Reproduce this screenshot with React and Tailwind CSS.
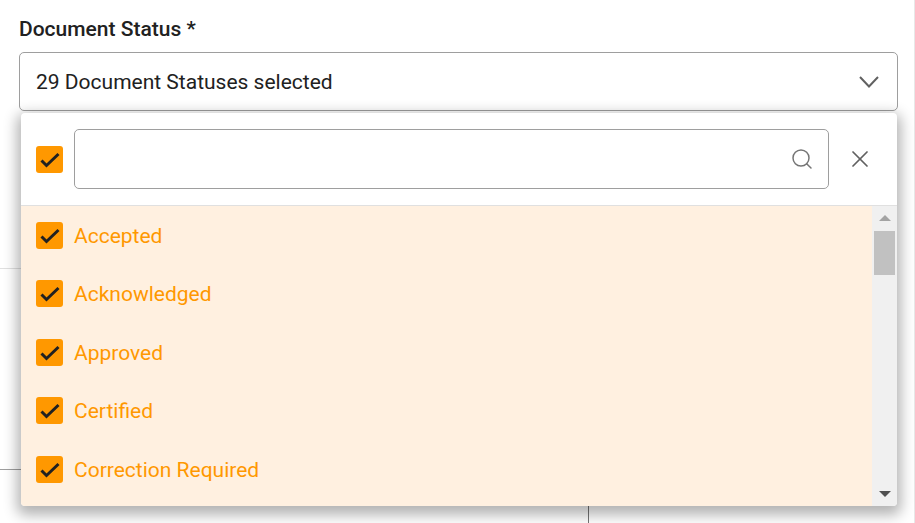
import React from 'react';
import { Search, X } from 'lucide-react';

const statuses = ['Accepted', 'Acknowledged', 'Approved', 'Certified', 'Correction Required'];

function Tick() {
    return (
        <span className="flex h-[27px] w-[27px] flex-shrink-0 items-center justify-center rounded-[3px] bg-[#ff9800]">
            <svg viewBox="0 0 27 27" className="h-[27px] w-[27px]" fill="none" stroke="#212121" strokeWidth="3">
                <path d="M5.5 14.5 L10.5 19.5 L22.5 8" />
            </svg>
        </span>
    );
}

export default function App() {
    return (
        <div className="relative h-[523px] w-[915px] overflow-hidden bg-white font-['Roboto',sans-serif]">
            {/* page behind the dropdown */}
            <div className="absolute left-0 top-[268px] h-px w-[21px] bg-[#e0e0e0]" />
            <div className="absolute left-0 top-[469px] h-px w-[21px] bg-[#9e9e9e]" />
            <div className="absolute left-[588px] top-[505px] h-[18px] w-px bg-[#757575]" />
            <div className="absolute left-[914px] top-0 h-full w-px bg-[#e8e8e8]" />

            <div className="flex flex-col pl-[19px] pr-[17px] pt-[16px]">
                <label className="text-[21px] font-medium leading-[26px] text-[#212121]">Document Status *</label>
                <div className="mt-[10px] flex h-[59px] items-center justify-between rounded-[5px] border border-[#9e9e9e] pl-[16px] pr-[18px] text-[21px] text-[#212121]">
                    <span className="pt-[2px]">29 Document Statuses selected</span>
                    <svg viewBox="0 0 20 12" className="h-[12px] w-[20px]" fill="none" stroke="#616161" strokeWidth="2">
                        <path d="M1 1 L10 10.5 L19 1" />
                    </svg>
                </div>
                <div className="absolute left-[21px] top-[113px] w-[876px] overflow-hidden rounded-[4px] bg-white shadow-[0_5px_14px_4px_rgba(0,0,0,0.3)]">
                    <div className="flex h-[93px] items-center border-b border-[#e0e0e0] pl-[15px]">
                        <Tick />
                        <div className="ml-[11px] flex h-[60px] w-[755px] items-center justify-end rounded-[5px] border border-[#9e9e9e] pr-[14px]">
                            <Search className="h-6 w-6 text-[#757575]" strokeWidth={1.5} />
                        </div>
                        <X className="ml-[17px] h-[28px] w-[28px] text-[#616161]" strokeWidth={1.5} />
                    </div>
                    <div className="flex h-[300px]">
                        <div className="flex-1 bg-[#fff0e0]">
                            {statuses.map((s) => (
                                <div key={s} className="flex h-[58.5px] items-center gap-[11px] pl-[15px] text-[21px] text-[#ff9800]">
                                    <Tick />
                                    <span className="pt-[2px]">{s}</span>
                                </div>
                            ))}
                        </div>
                        <div className="flex w-[25px] flex-col items-center bg-[#f0f0f0]">
                            <span className="mt-[9px] h-0 w-0 border-x-[6px] border-b-[6px] border-x-transparent border-b-[#a3a3a3]" />
                            <span className="mt-[10px] h-[44px] w-[21px] bg-[#c1c1c1]" />
                            <span className="mt-auto mb-[9px] h-0 w-0 border-x-[6px] border-t-[6px] border-x-transparent border-t-[#505050]" />
                        </div>
                    </div>
                </div>
            </div>
        </div>
    );
}
